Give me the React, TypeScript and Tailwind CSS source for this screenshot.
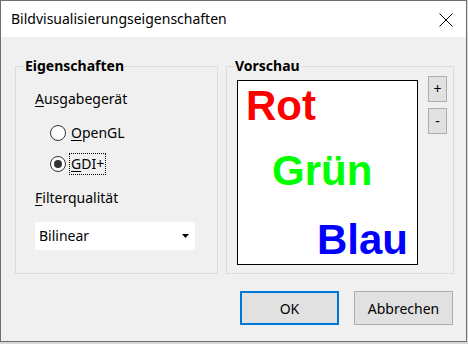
import React from "react";

const uiFont = { fontFamily: '"Noto Sans", "Open Sans", sans-serif' };

function Radio({ label, checked }: { label: string; checked?: boolean }) {
  const first = label.slice(0, 1);
  const rest = label.slice(1);
  return (
    <div className="flex items-center gap-[3px] h-[20px]">
      <span className="flex h-[16px] w-[16px] items-center justify-center rounded-full border border-[#333333] bg-white">
        {checked && <span className="h-[8px] w-[8px] rounded-full bg-[#333333]" />}
      </span>
      <span
        className={
          checked
            ? "border border-dotted border-black px-[1px] leading-[20px]"
            : "border border-transparent px-[1px] leading-[20px]"
        }
      >
        <span className="underline underline-offset-2">{first}</span>
        {rest}
      </span>
    </div>
  );
}

function PreviewBox() {
  return (
    <div
      className="flex h-[185px] w-[181px] flex-col border border-black bg-white pl-[8px] font-bold text-[42px] leading-[42px]"
      style={{ fontFamily: '"Liberation Sans", Arial, sans-serif' }}
    >
      <span className="mt-[4px] text-[#ff0000]">Rot</span>
      <span className="mt-[23px] ml-[26px] text-[#00ff00]">Grün</span>
      <span className="mt-[27px] ml-[71px] text-[#0000ff]">Blau</span>
    </div>
  );
}

export default function App() {
  return (
    <div className="h-[344px] w-[468px] bg-[#d8d8d8]" style={uiFont}>
      <div className="flex h-[342px] w-[467px] flex-col border border-[#6e6e6e] bg-[#f0f0f0] text-black">
        {/* title bar */}
        <div className="flex h-[36px] items-center justify-between bg-white pl-[10px] pr-[13px]">
          <span className="text-[14px] leading-[20px] -mt-[1px]">Bildvisualisierungseigenschaften</span>
          <svg width="14" height="14" viewBox="0 0 14 14" className="mt-[1px]">
            <path d="M0.5 0.5 L13.5 13.5 M13.5 0.5 L0.5 13.5" stroke="#000" strokeWidth="1" fill="none" />
          </svg>
        </div>

        <div className="flex gap-[8px] pl-[14px] pt-[19px] text-[14px]">
          {/* Eigenschaften */}
          <fieldset className="h-[218px] w-[203px] border border-[#dcdcdc] px-[19px]">
            <legend className="-ml-[11px] px-[1px] font-bold text-[14px] leading-[20px]">Eigenschaften</legend>
            <div className="mt-[13px] leading-[20px]">
              <span className="underline underline-offset-2">A</span>usgabegerät
            </div>
            <div className="mt-[14px] flex flex-col gap-[11px] pl-[15px]">
              <Radio label="OpenGL" />
              <Radio label="GDI+" checked />
            </div>
            <div className="mt-[14px] leading-[20px]">
              <span className="underline underline-offset-2">F</span>ilterqualität
            </div>
            <div className="mt-[14px] flex h-[28px] w-[160px] items-center justify-between bg-white pl-[4px] pr-[6px]">
              <span className="leading-[20px]">Bilinear</span>
              <svg width="7" height="4" viewBox="0 0 7 4">
                <path d="M0 0 H7 L3.5 4 Z" fill="#000" />
              </svg>
            </div>
          </fieldset>

          {/* Vorschau */}
          <fieldset className="h-[218px] w-[228px] border border-[#dcdcdc] pl-[10px] pr-[6px]">
            <legend className="-ml-[3px] px-[1px] font-bold text-[14px] leading-[20px]">Vorschau</legend>
            <div className="mt-[4px] flex gap-[10px]">
              <PreviewBox />
              <div className="mt-[-4px] flex flex-col gap-[6px]">
                <button className="h-[26px] w-[19px] border border-[#adadad] bg-[#e1e1e1] text-[14px] leading-[20px]">+</button>
                <button className="h-[26px] w-[19px] border border-[#adadad] bg-[#e1e1e1] text-[14px] leading-[20px]">-</button>
              </div>
            </div>
          </fieldset>
        </div>

        {/* buttons */}
        <div className="mt-[17px] flex justify-end gap-[15px] pr-[13px] text-[14px]">
          <button className="h-[34px] w-[99px] border-2 border-[#0078d7] bg-[#e1e1e1]">OK</button>
          <button className="h-[34px] w-[99px] border border-[#adadad] bg-[#e1e1e1]">Abbrechen</button>
        </div>
      </div>
    </div>
  );
}
